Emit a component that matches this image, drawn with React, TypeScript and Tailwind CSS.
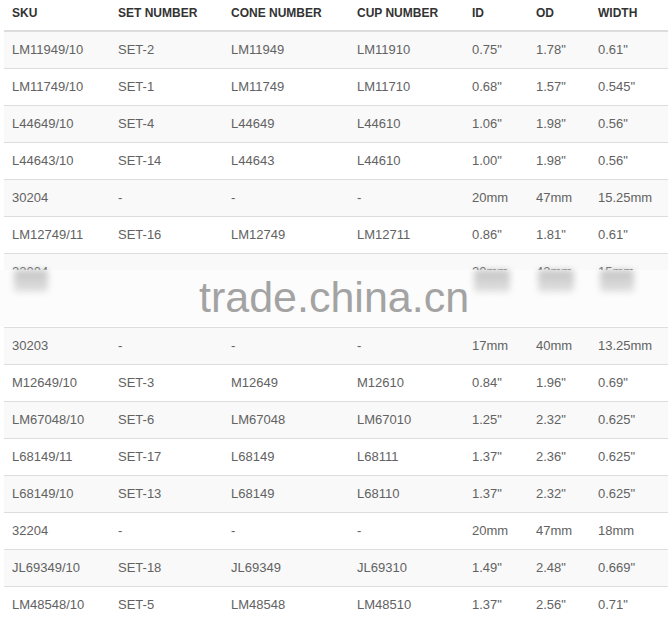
import React from 'react';

type Row = string[];

const headers = ['SKU', 'SET NUMBER', 'CONE NUMBER', 'CUP NUMBER', 'ID', 'OD', 'WIDTH'];

const rows: Row[] = [
  ['LM11949/10', 'SET-2', 'LM11949', 'LM11910', '0.75"', '1.78"', '0.61"'],
  ['LM11749/10', 'SET-1', 'LM11749', 'LM11710', '0.68"', '1.57"', '0.545"'],
  ['L44649/10', 'SET-4', 'L44649', 'L44610', '1.06"', '1.98"', '0.56"'],
  ['L44643/10', 'SET-14', 'L44643', 'L44610', '1.00"', '1.98"', '0.56"'],
  ['30204', '-', '-', '-', '20mm', '47mm', '15.25mm'],
  ['LM12749/11', 'SET-16', 'LM12749', 'LM12711', '0.86"', '1.81"', '0.61"'],
  ['32004', '', '', '', '20mm', '42mm', '15mm'],
  ['', '', '', '', '', '', ''],
  ['30203', '-', '-', '-', '17mm', '40mm', '13.25mm'],
  ['M12649/10', 'SET-3', 'M12649', 'M12610', '0.84"', '1.96"', '0.69"'],
  ['LM67048/10', 'SET-6', 'LM67048', 'LM67010', '1.25"', '2.32"', '0.625"'],
  ['L68149/11', 'SET-17', 'L68149', 'L68111', '1.37"', '2.36"', '0.625"'],
  ['L68149/10', 'SET-13', 'L68149', 'L68110', '1.37"', '2.32"', '0.625"'],
  ['32204', '-', '-', '-', '20mm', '47mm', '18mm'],
  ['JL69349/10', 'SET-18', 'JL69349', 'JL69310', '1.49"', '2.48"', '0.669"'],
  ['LM48548/10', 'SET-5', 'LM48548', 'LM48510', '1.37"', '2.56"', '0.71"'],
];

const cols = 'grid grid-cols-[106px_113px_126px_115px_64px_62px_78px]';

// blurred smudges left by the watermark image over the hidden rows
const smudges = [
  'left-[14px] w-[34px]',
  'left-[474px] w-[36px]',
  'left-[538px] w-[36px]',
  'left-[600px] w-[34px]',
];

export default function App() {
  return (
    <div
      className="relative h-[619px] w-[668px] overflow-hidden bg-white pl-[4px] pt-[1px]"
      style={{ fontFamily: '"Liberation Sans", Arial, sans-serif' }}
    >
      <div className="w-[664px]">
        <div className={`${cols} h-[31px] border-b-2 border-[#dddddd]`}>
          {headers.map((h) => (
            <div
              key={h}
              className="px-2 pt-[3px] text-[12px] leading-[18px] font-bold text-[#333333]"
            >
              {h}
            </div>
          ))}
        </div>
        {rows.map((r, i) => (
          <div
            key={i}
            className={`${cols} h-[37px] border-b border-[#dddddd] ${
              i % 2 === 0 ? 'bg-[#f9f9f9]' : 'bg-white'
            }`}
          >
            {r.map((c, j) => (
              <div
                key={j}
                className="flex items-center px-2 text-[13px] text-[#626262]"
              >
                {c}
              </div>
            ))}
          </div>
        ))}
      </div>

      <div className="absolute left-0 top-[270px] h-[56px] w-[668px] bg-[#fcfcfc]">
        {smudges.map((s) => (
          <div
            key={s}
            className={`absolute top-[0px] h-[22px] rounded-sm bg-gradient-to-b from-[#c4c4c4] to-[#e2e2e2] blur-[3px] ${s}`}
          />
        ))}
        <div className="absolute left-[199px] top-[6px] text-[43px] leading-none text-[#a3a3a3]">
          trade.china.cn
        </div>
      </div>
    </div>
  );
}
